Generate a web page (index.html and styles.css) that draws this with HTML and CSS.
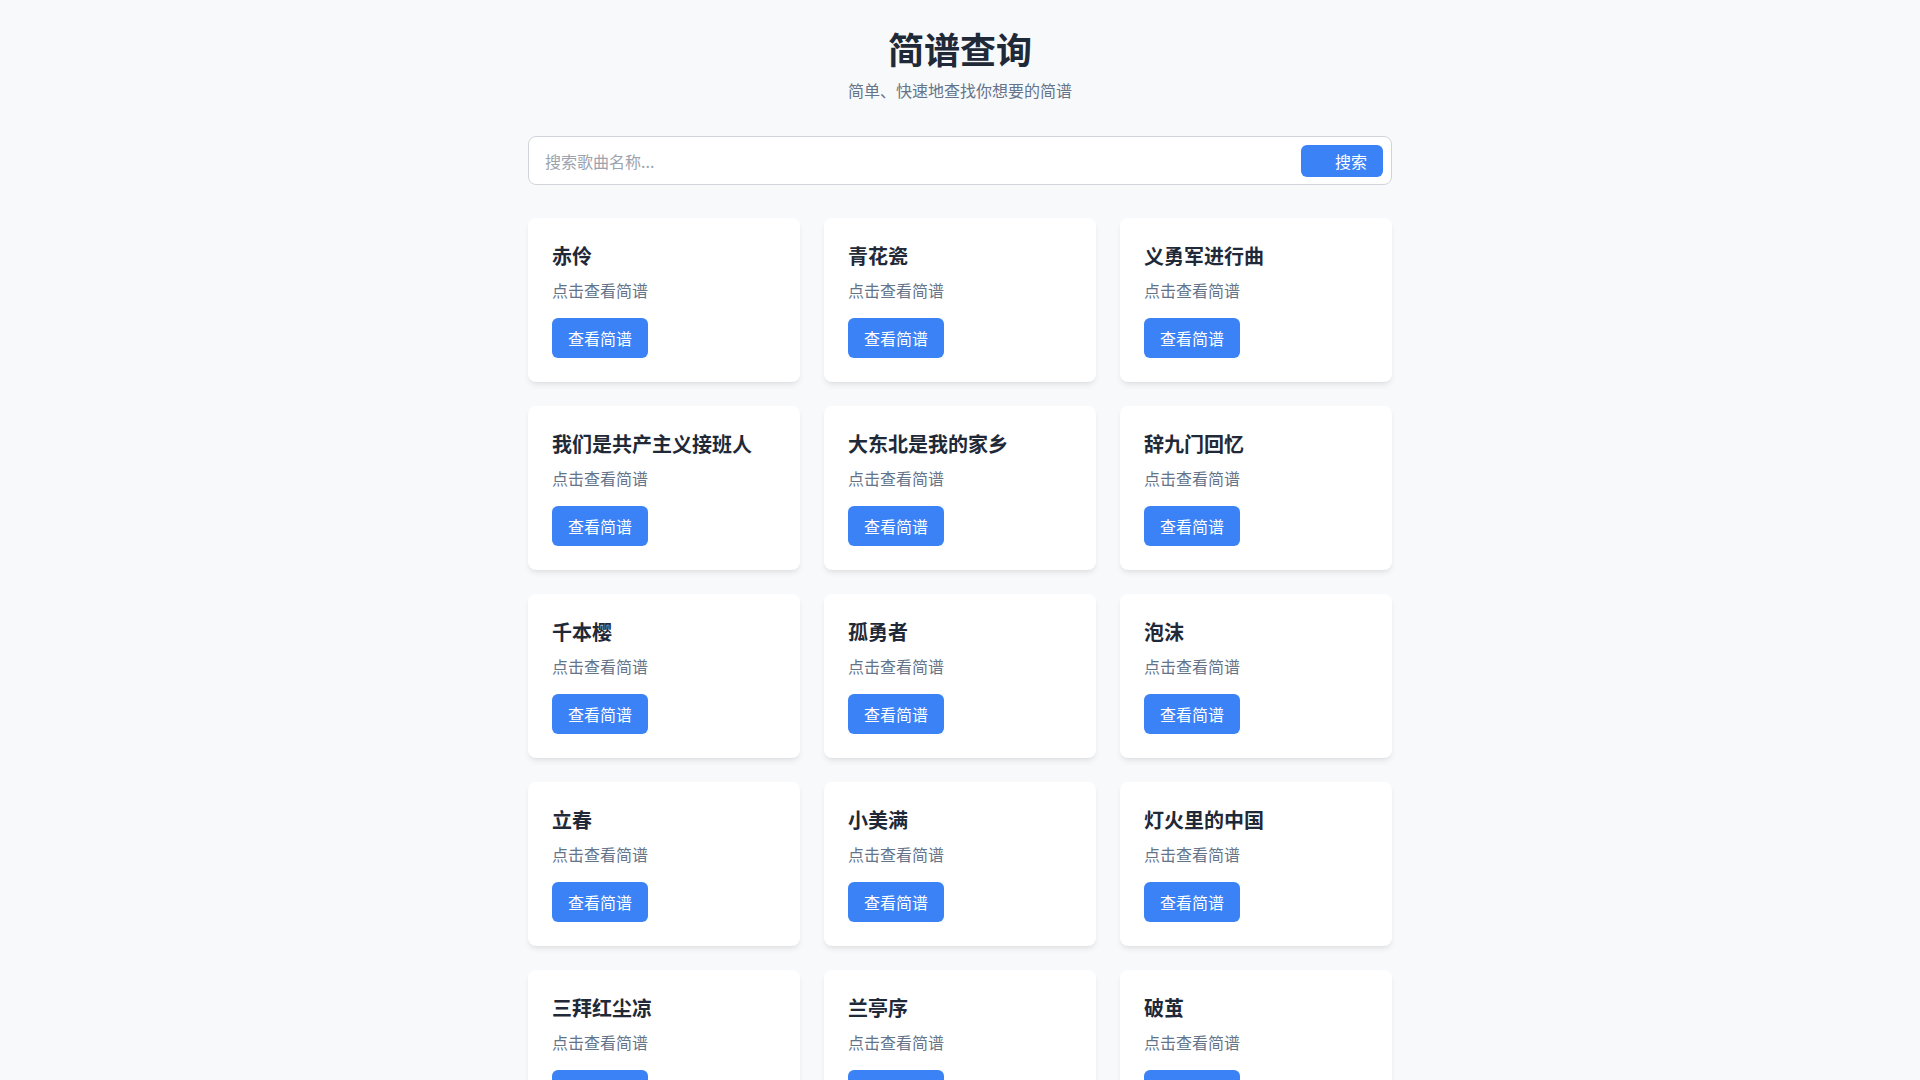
FILE: index.html
```html
<!DOCTYPE html>
<html lang="zh-CN">
<head>
<meta charset="utf-8">
<title>简谱查询</title>
<link rel="stylesheet" href="styles.css">
</head>
<body>
<div class="container">
  <header class="header">
    <h1 class="title">简谱查询</h1>
    <p class="subtitle">简单、快速地查找你想要的简谱</p>
  </header>
  <div class="search">
    <input class="search-input" type="text" placeholder="搜索歌曲名称...">
    <button class="search-btn">搜索</button>
  </div>
  <div class="grid">
    <div class="card"><h3 class="card-title">赤伶</h3><p class="card-desc">点击查看简谱</p><button class="card-btn">查看简谱</button></div>
    <div class="card"><h3 class="card-title">青花瓷</h3><p class="card-desc">点击查看简谱</p><button class="card-btn">查看简谱</button></div>
    <div class="card"><h3 class="card-title">义勇军进行曲</h3><p class="card-desc">点击查看简谱</p><button class="card-btn">查看简谱</button></div>
    <div class="card"><h3 class="card-title">我们是共产主义接班人</h3><p class="card-desc">点击查看简谱</p><button class="card-btn">查看简谱</button></div>
    <div class="card"><h3 class="card-title">大东北是我的家乡</h3><p class="card-desc">点击查看简谱</p><button class="card-btn">查看简谱</button></div>
    <div class="card"><h3 class="card-title">辞九门回忆</h3><p class="card-desc">点击查看简谱</p><button class="card-btn">查看简谱</button></div>
    <div class="card"><h3 class="card-title">千本樱</h3><p class="card-desc">点击查看简谱</p><button class="card-btn">查看简谱</button></div>
    <div class="card"><h3 class="card-title">孤勇者</h3><p class="card-desc">点击查看简谱</p><button class="card-btn">查看简谱</button></div>
    <div class="card"><h3 class="card-title">泡沫</h3><p class="card-desc">点击查看简谱</p><button class="card-btn">查看简谱</button></div>
    <div class="card"><h3 class="card-title">立春</h3><p class="card-desc">点击查看简谱</p><button class="card-btn">查看简谱</button></div>
    <div class="card"><h3 class="card-title">小美满</h3><p class="card-desc">点击查看简谱</p><button class="card-btn">查看简谱</button></div>
    <div class="card"><h3 class="card-title">灯火里的中国</h3><p class="card-desc">点击查看简谱</p><button class="card-btn">查看简谱</button></div>
    <div class="card"><h3 class="card-title">三拜红尘凉</h3><p class="card-desc">点击查看简谱</p><button class="card-btn">查看简谱</button></div>
    <div class="card"><h3 class="card-title">兰亭序</h3><p class="card-desc">点击查看简谱</p><button class="card-btn">查看简谱</button></div>
    <div class="card"><h3 class="card-title">破茧</h3><p class="card-desc">点击查看简谱</p><button class="card-btn">查看简谱</button></div>
  </div>
</div>
</body>
</html>
```
FILE: styles.css
```css
* { box-sizing: border-box; }
html, body { margin: 0; padding: 0; }
body {
  background: #f8f9fb;
  font-family: "Noto Sans CJK SC", "Noto Sans", sans-serif;
  color: #1f2937;
}
.container {
  max-width: 896px;
  margin: 0 auto;
  padding: 28px 16px 32px;
}
.header { text-align: center; margin-bottom: 34px; }
.title {
  margin: 0 0 10px;
  font-size: 36px;
  line-height: 40px;
  font-weight: 700;
  color: #1f2937;
}
.subtitle {
  margin: 0;
  font-size: 16px;
  line-height: 24px;
  color: #64748b;
}
.search {
  display: flex;
  align-items: center;
  background: #fff;
  border: 1px solid #d1d5db;
  border-radius: 8px;
  height: 49px;
  padding: 0 8px 0 16px;
  margin-bottom: 33px;
}
.search-input {
  flex: 1;
  border: none;
  outline: none;
  background: transparent;
  font-family: inherit;
  font-size: 16px;
  line-height: 24px;
  color: #1f2937;
  padding: 0;
}
.search-input::placeholder { color: #9ca3af; }
.search-btn {
  background: #3b82f6;
  color: #fff;
  border: none;
  border-radius: 6px;
  height: 32px;
  padding: 0 16px 0 34px;
  font-family: inherit;
  font-size: 16px;
  line-height: 24px;
}
.grid {
  display: grid;
  grid-template-columns: repeat(3, 1fr);
  gap: 24px;
}
.card {
  background: #fff;
  border-radius: 8px;
  padding: 24px;
  box-shadow: 0 4px 6px -1px rgba(0,0,0,0.08), 0 2px 4px -2px rgba(0,0,0,0.06);
}
.card-title {
  margin: 0 0 8px;
  font-size: 20px;
  line-height: 28px;
  font-weight: 700;
  color: #1f2937;
}
.card-desc {
  margin: 0 0 16px;
  font-size: 16px;
  line-height: 24px;
  color: #64748b;
}
.card-btn {
  display: block;
  background: #3b82f6;
  color: #fff;
  border: none;
  border-radius: 6px;
  padding: 8px 16px;
  font-family: inherit;
  font-size: 16px;
  line-height: 24px;
}
```
